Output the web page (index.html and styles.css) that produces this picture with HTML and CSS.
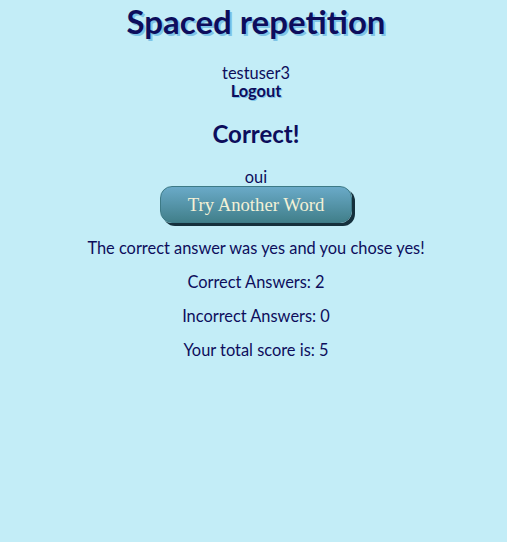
FILE: index.html
```html
<!DOCTYPE html>
<html>
<head>
<meta charset="utf-8">
<link rel="stylesheet" href="styles.css">
</head>
<body>
<header class="header">
  <h1 class="title">Spaced repetition</h1>
  <div class="user">
    <span class="username">testuser3</span>
    <a class="logout" href="#">Logout</a>
  </div>
</header>
<main class="main">
  <h2 class="result">Correct!</h2>
  <p class="word">oui</p>
  <button class="try-btn">Try Another Word</button>
  <p class="line">The correct answer was yes and you chose yes!</p>
  <p class="line">Correct Answers: 2</p>
  <p class="line">Incorrect Answers: 0</p>
  <p class="line">Your total score is: 5</p>
</main>
</body>
</html>
```
FILE: styles.css
```css
html, body {
  margin: 0;
  padding: 0;
  background: #c3edf7;
}
body {
  padding-left: 5px;
  font-family: "Lato", "Noto Sans", sans-serif;
  color: #0d0d5c;
  font-size: 16.4px;
  text-align: center;
}
.header {
  display: flex;
  flex-direction: column;
  align-items: center;
}
.title {
  margin: 0;
  padding-top: 3px;
  font-size: 33px;
  line-height: 37px;
  font-weight: 700;
  text-shadow: 2px 2px 0 #7ec3e6;
}
.user {
  margin-top: 24px;
  display: flex;
  flex-direction: column;
  align-items: center;
  line-height: 18px;
}
.logout {
  color: #0d0d5c;
  font-weight: 700;
  text-decoration: none;
  text-shadow: 1px 1px 0 #7ec3e6;
}
.main {
  display: flex;
  flex-direction: column;
  align-items: center;
}
.result {
  margin: 20px 0 0;
  font-size: 24px;
  line-height: 28px;
  font-weight: 700;
}
.word {
  margin: 20px 0 0;
  line-height: 18px;
}
.try-btn {
  width: 192px;
  height: 37px;
  border: 1px solid #3d7a86;
  border-radius: 12px;
  background: linear-gradient(#6aaac8, #417f8a);
  box-shadow: 3px 3px 0 #15303c;
  color: #f3f1d6;
  font-family: "Liberation Serif", serif;
  font-size: 18.7px;
  padding: 0;
}
.line {
  margin: 16px 0 0;
  line-height: 18px;
}
```
